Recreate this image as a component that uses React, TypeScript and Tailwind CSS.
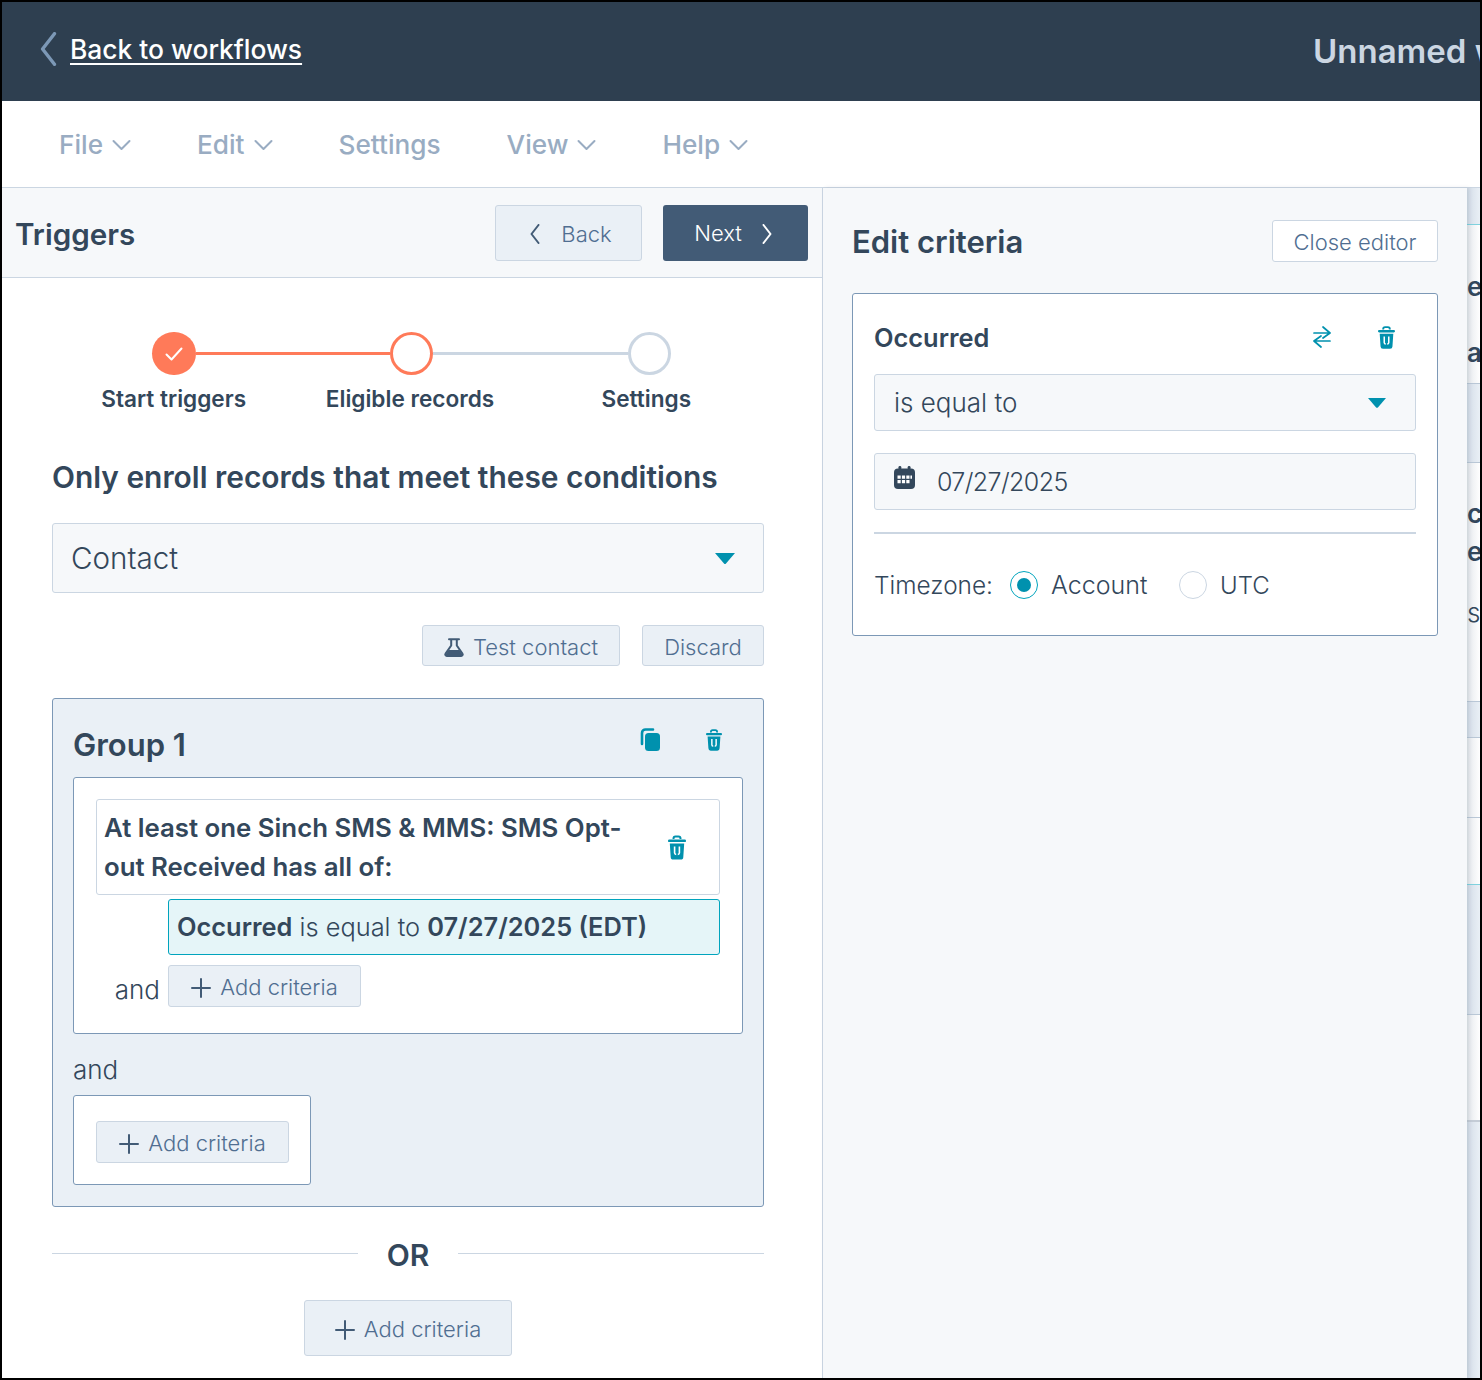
import type { ReactNode } from "react";

function Chevron({ dir, className }: { dir: "left" | "right" | "down"; className: string }) {
  const d = dir === "left" ? "M9 1 2 10l7 9" : dir === "right" ? "M2 1l7 9-7 9" : "M1 2l8 8 8-8";
  const box = dir === "down" ? "0 0 18 12" : "0 0 11 20";
  return (
    <svg viewBox={box} fill="none" stroke="currentColor" strokeWidth="2" strokeLinecap="round" strokeLinejoin="round" className={className}>
      <path d={d} />
    </svg>
  );
}

function Trash({ className }: { className: string }) {
  return (
    <svg viewBox="0 0 18 24" className={className}>
      <path d="M5.5 3.5V3a2 2 0 0 1 2-2h3a2 2 0 0 1 2 2v.5" fill="none" stroke="#0091ae" strokeWidth="2" />
      <rect x="0" y="4" width="18" height="2.6" rx="1.2" fill="#0091ae" />
      <path d="M1.8 8h14.4l-.9 13.4A2.6 2.6 0 0 1 12.7 24H5.3a2.6 2.6 0 0 1-2.6-2.6z" fill="#0091ae" />
      <path d="M6.6 11v6.5a1.6 1.6 0 0 0 1.6 1.4M11.4 11v6.5a1.6 1.6 0 0 1-1.6 1.4" fill="none" stroke="#fff" strokeWidth="1.6" />
    </svg>
  );
}

function Copy() {
  return (
    <svg viewBox="0 0 20 23" className="w-5 h-[23px]">
      <path d="M2 16V5a3.5 3.5 0 0 1 3.5-3.5H13" fill="none" stroke="#0091ae" strokeWidth="2.6" strokeLinecap="round" />
      <rect x="5" y="5" width="15" height="18" rx="3.5" fill="#0091ae" />
    </svg>
  );
}

function Plus({ className }: { className: string }) {
  return (
    <svg viewBox="0 0 20 20" fill="none" stroke="currentColor" strokeWidth="2" strokeLinecap="round" className={className}>
      <path d="M10 1v18M1 10h18" />
    </svg>
  );
}

function Caret({ className }: { className: string }) {
  return (
    <svg viewBox="0 0 20 11" className={className}>
      <path d="M0 0h20L11 10.4a1.4 1.4 0 0 1-2 0z" fill="#0091ae" />
    </svg>
  );
}

function Calendar() {
  return (
    <svg viewBox="0 0 21 23" className="w-[21px] h-[23px]">
      <rect x="4.5" y="0" width="2.8" height="5" rx="1.2" fill="#33475b" />
      <rect x="13.7" y="0" width="2.8" height="5" rx="1.2" fill="#33475b" />
      <rect x="0" y="2.5" width="21" height="20.5" rx="4" fill="#33475b" />
      <path d="M3.5 9.5h3.2v3.2H3.5zM7.9 9.5h3.2v3.2H7.9zM12.3 9.5h3.2v3.2h-3.2zM16.4 9.5h1.6v3.2h-1.6zM3.5 14h3.2v3.2H3.5zM7.9 14h3.2v3.2H7.9zM12.3 14h3.2v3.2h-3.2z" fill="#fff" />
    </svg>
  );
}

function Flask() {
  return (
    <svg viewBox="0 0 20 19" className="w-5 h-[19px]">
      <path d="M5 1.2h10M7.2 1.5v6L1.6 15.6a1.5 1.5 0 0 0 1.2 2.4h14.4a1.5 1.5 0 0 0 1.2-2.4L12.8 7.5v-6" fill="none" stroke="#425b76" strokeWidth="2" strokeLinejoin="round" strokeLinecap="round" />
      <path d="M4.8 12h10.4l3.2 4.4a1 1 0 0 1-1 1.6H2.6a1 1 0 0 1-1-1.6z" fill="#425b76" />
    </svg>
  );
}

function Swap() {
  return (
    <svg viewBox="0 0 18 22" fill="none" stroke="#0091ae" strokeWidth="1.7" strokeLinecap="round" strokeLinejoin="round" className="w-[18px] h-[22px]">
      <path d="M1 7h16M10 1l7 6-7 5" />
      <path d="M17 15H1M8 10l-7 5 7 6" />
    </svg>
  );
}

function Btn({ width, height, children }: { width: string; height: string; children: ReactNode }) {
  return (
    <div className={`${width} ${height} flex items-center justify-center pt-[3px] rounded-[3px] border border-[#cbd6e2] bg-[#eaf0f6] text-[22px] font-light text-[#506e91] whitespace-nowrap`}>
      {children}
    </div>
  );
}

function AddCriteria({ width, height }: { width: string; height: string }) {
  return (
    <Btn width={width} height={height}>
      <span className="flex items-center gap-[9px]">
        <Plus className="w-5 h-5 text-[#425b76]" />
        Add criteria
      </span>
    </Btn>
  );
}

function NavItem({ label, menu = true }: { label: string; menu?: boolean }) {
  return (
    <div className="flex items-center gap-[9px] text-[26.2px] font-medium text-[#99acc2]">
      {label}
      {menu && <Chevron dir="down" className="w-[19px] h-[12px] text-[#99acc2]" />}
    </div>
  );
}

// the page behind the editor, cut off at the right edge
const stripRows = [
  { h: "h-[37px]", cls: "bg-gradient-to-r from-[#d3dce7] to-[#eaf0f6]", line: "border-b border-[#7fd1de]" },
  { h: "h-[159px]", cls: "bg-gradient-to-r from-[#e4e8ec] to-white", line: "border-b border-[#b9c7d6]" },
  { h: "h-[79px]", cls: "bg-gradient-to-r from-[#d3dce7] to-[#eaf0f6]", line: "border-b border-[#b9c7d6]" },
  { h: "h-[239px]", cls: "bg-gradient-to-r from-[#e4e8ec] to-white", line: "border-b border-[#b9c7d6]" },
  { h: "h-[36px]", cls: "bg-gradient-to-r from-[#d3dce7] to-[#eaf0f6]", line: "border-b border-[#b9c7d6]" },
  { h: "h-[80px]", cls: "bg-gradient-to-r from-[#e4e8ec] to-white", line: "border-b border-[#b9c7d6]" },
  { h: "h-[67px]", cls: "bg-gradient-to-r from-[#e4e8ec] to-white", line: "border-b border-[#7fd1de]" },
  { h: "h-[130px]", cls: "bg-gradient-to-r from-[#d3dce7] to-[#eaf0f6]", line: "border-b border-[#b9c7d6]" },
  { h: "h-[107px]", cls: "bg-gradient-to-r from-[#e4e8ec] to-white", line: "border-b-2 border-[#c4ccd6]" },
  { h: "flex-1", cls: "bg-gradient-to-r from-[#d3dce7] to-[#eaf0f6]", line: "" },
];

function Strip() {
  return (
    <div className="w-[13px] flex flex-col overflow-hidden text-[#33475b]">
      {stripRows.map((r, i) => (
        <div key={i} className={`${r.h} ${r.cls} ${r.line} shrink-0 overflow-hidden`}>
          {i === 1 && (
            <div className="flex flex-col text-[26px] font-semibold leading-[28px]">
              <span className="mt-[48px]">e</span>
              <span className="mt-[38px]">a</span>
            </div>
          )}
          {i === 3 && (
            <div className="flex flex-col text-[26px] leading-[28px]">
              <span className="mt-[37px] font-semibold">c</span>
              <span className="mt-[10px] font-semibold">e</span>
              <span className="mt-[33px] font-light">s</span>
            </div>
          )}
        </div>
      ))}
    </div>
  );
}

export default function App() {
  return (
    <div className="w-[1482px] h-[1380px] flex flex-col border-2 border-black bg-white overflow-hidden font-['Inter',sans-serif] text-[#33475b]">
      <header className="h-[99px] shrink-0 flex items-center bg-[#2e3f50] overflow-hidden">
        <div className="w-[1311px] shrink-0 -mt-1 flex items-center pl-[35px] gap-[10px] text-[26.4px] font-medium text-white">
          <Chevron dir="left" className="w-[23px] h-[34px] text-[#7c98b6]" />
          <span className="underline underline-offset-4">Back to workflows</span>
        </div>
        <span className="whitespace-nowrap text-[33px] font-semibold text-[#cbd6e2]">Unnamed workflow</span>
      </header>

      <nav className="h-[87px] shrink-0 flex items-center gap-[66px] pl-[57px] pt-[2px] border-b border-[#cbd6e2]">
        <NavItem label="File" />
        <NavItem label="Edit" />
        <NavItem label="Settings" menu={false} />
        <NavItem label="View" />
        <NavItem label="Help" />
      </nav>

      <div className="flex-1 flex min-h-0">
        <main className="w-[821px] shrink-0 border-r border-[#cbd6e2]">
          <div className="h-[90px] flex items-center justify-between pl-[13px] pr-[14px] bg-[#f6f8fa] border-b border-[#cbd6e2]">
            <h1 className="mt-1 text-[29.6px] font-semibold">Triggers</h1>
            <div className="flex items-center gap-[21px]">
              <Btn width="w-[147px]" height="h-[56px]">
                <span className="flex items-center gap-5 pl-1">
                  <Chevron dir="left" className="w-[12px] h-[20px] text-[#425b76]" />
                  Back
                </span>
              </Btn>
              <div className="w-[145px] h-[56px] flex items-center justify-center gap-[19px] pt-[2px] pr-1 rounded-[3px] bg-[#425b76] text-[22px] font-light text-white">
                Next
                <Chevron dir="right" className="w-[12px] h-[20px] text-white" />
              </div>
            </div>
          </div>

          <div className="w-[762px] pl-[50px]">
            <div className="mt-[54px] ml-[100px] flex items-center">
              <div className="w-11 h-[43px] shrink-0 rounded-full bg-[#ff7a59] flex items-center justify-center">
                <svg viewBox="0 0 18 14" fill="none" stroke="#fff" strokeWidth="2" strokeLinecap="round" strokeLinejoin="round" className="w-[18px] h-[14px]">
                  <path d="M1.5 7.5 6.5 12.5 16.5 1.5" />
                </svg>
              </div>
              <div className="w-[194px] h-[3px] bg-[#ff7a59]" />
              <div className="w-[43px] h-[43px] shrink-0 rounded-full border-[3px] border-[#ff7a59]" />
              <div className="w-[195px] h-[3px] bg-[#cbd6e2]" />
              <div className="w-[43px] h-[43px] shrink-0 rounded-full border-[3px] border-[#cbd6e2]" />
            </div>
            <div className="mt-[10px] ml-1 flex text-[22.6px] leading-[28px] font-semibold text-center whitespace-nowrap">
              <div className="w-[238px]">Start triggers</div>
              <div className="w-[240px]">Eligible records</div>
              <div className="w-[238px]">Settings</div>
            </div>

            <h2 className="mt-[44px] text-[29.9px] leading-[40px] font-semibold whitespace-nowrap">Only enroll records that meet these conditions</h2>

            <div className="mt-[26px] h-[70px] flex items-center justify-between pl-[18px] pr-[28px] rounded-[3px] border border-[#cbd6e2] bg-[#f6f8fa] text-[29.6px] font-light">
              Contact
              <Caret className="w-5 h-[11px]" />
            </div>

            <div className="mt-8 flex justify-end gap-[22px]">
              <Btn width="w-[198px]" height="h-[41px]">
                <span className="flex items-center gap-[9px]">
                  <Flask />
                  Test contact
                </span>
              </Btn>
              <Btn width="w-[122px]" height="h-[41px]">Discard</Btn>
            </div>

            <section className="mt-8 h-[509px] px-5 rounded-[3px] border border-[#7c98b6] bg-[#eaf0f6]">
              <div className="h-[78px] flex items-center justify-between pr-[21px]">
                <h3 className="mt-[15px] text-[31px] font-semibold">Group 1</h3>
                <div className="mt-[3px] flex items-center gap-[46px]">
                  <Copy />
                  <Trash className="w-4 h-[22px]" />
                </div>
              </div>

              <div className="h-[257px] pt-[21px] px-[22px] rounded-[3px] border border-[#7c98b6] bg-white">
                <div className="h-[96px] flex items-center justify-between pl-[7px] pr-[33px] rounded-[3px] border border-[#cbd6e2]">
                  <p className="w-[540px] text-[25.8px] leading-[39px] font-semibold">At least one Sinch SMS &amp; MMS: SMS Opt-out Received has all of:</p>
                  <Trash className="w-[18px] h-[25px]" />
                </div>
                <div className="mt-1 ml-[72px] h-[56px] flex items-center pl-2 rounded-[3px] border border-[#00a4bd] bg-[#e5f5f8] text-[25.4px] font-light whitespace-nowrap">
                  <b className="font-semibold">Occurred</b>&nbsp;is equal to&nbsp;<b className="font-semibold">07/27/2025 (EDT)</b>
                </div>
                <div className="mt-[10px] flex items-start gap-2">
                  <span className="w-[64px] mt-[5px] text-right text-[26px] font-light">and</span>
                  <AddCriteria width="w-[193px]" height="h-[42px]" />
                </div>
              </div>

              <p className="mt-[18px] text-[26px] leading-[36px] font-light">and</p>
              <div className="mt-[7px] w-[238px] h-[90px] pt-[25px] pl-[22px] rounded-[3px] border border-[#7c98b6] bg-white">
                <AddCriteria width="w-[193px]" height="h-[42px]" />
              </div>
            </section>

            <div className="mt-[22px] h-[48px] flex items-center">
              <div className="flex-1 h-px bg-[#cbd6e2]" />
              <span className="w-[100px] mt-1 text-center text-[30px] font-semibold">OR</span>
              <div className="flex-1 h-px bg-[#cbd6e2]" />
            </div>

            <div className="mt-[23px] flex justify-center">
              <AddCriteria width="w-[208px]" height="h-[56px]" />
            </div>
          </div>
        </main>

        <aside className="w-[644px] shrink-0 pl-[29px] pr-[29px] bg-[#f6f8fa] shadow-[2px_0_4px_rgba(45,62,80,0.12)] z-10">
          <div className="mt-8 h-[42px] flex items-center justify-between">
            <h2 className="mt-[2px] text-[31px] font-semibold">Edit criteria</h2>
            <div className="w-[166px] h-[42px] flex items-center justify-center pt-[3px] rounded-[3px] border border-[#cbd6e2] bg-white text-[22px] font-light text-[#506e91]">Close editor</div>
          </div>

          <div className="mt-[31px] h-[343px] pt-[25px] px-[21px] rounded-[3px] border border-[#7c98b6] bg-white">
            <div className="h-[38px] flex items-center justify-between pr-[21px]">
              <span className="text-[25.4px] font-semibold">Occurred</span>
              <div className="-mt-[2px] flex items-center gap-[47px]">
                <Swap />
                <Trash className="w-[17px] h-[23px]" />
              </div>
            </div>
            <div className="mt-[17px] h-[57px] flex items-center justify-between pl-[19px] pr-[29px] rounded-[3px] border border-[#cbd6e2] bg-[#f6f8fa] text-[26px] font-light">
              is equal to
              <Caret className="w-[18px] h-[10px]" />
            </div>
            <div className="mt-[22px] h-[57px] flex items-center gap-[22px] pl-[19px] pt-[3px] rounded-[3px] border border-[#cbd6e2] bg-[#f6f8fa] text-[25px] tracking-[-0.6px] font-light">
              <div className="-mt-[11px]"><Calendar /></div>
              07/27/2025
            </div>
            <div className="mt-[22px] h-[2px] bg-[#cbd6e2]" />
            <div className="mt-[33px] flex items-center text-[25px] font-light">
              <span className="w-[136px] text-[24.4px]">Timezone:</span>
              <div className="-mt-[2px] w-7 h-7 rounded-full border border-[#00a4bd] flex items-center justify-center bg-white">
                <div className="w-[14px] h-[14px] rounded-full bg-[#0091ae]" />
              </div>
              <span className="ml-[13px] w-[128px]">Account</span>
              <div className="-mt-[2px] w-7 h-7 rounded-full border border-[#cbd6e2] bg-white" />
              <span className="ml-[13px] text-[24px]">UTC</span>
            </div>
          </div>
        </aside>

        <Strip />
      </div>
    </div>
  );
}
